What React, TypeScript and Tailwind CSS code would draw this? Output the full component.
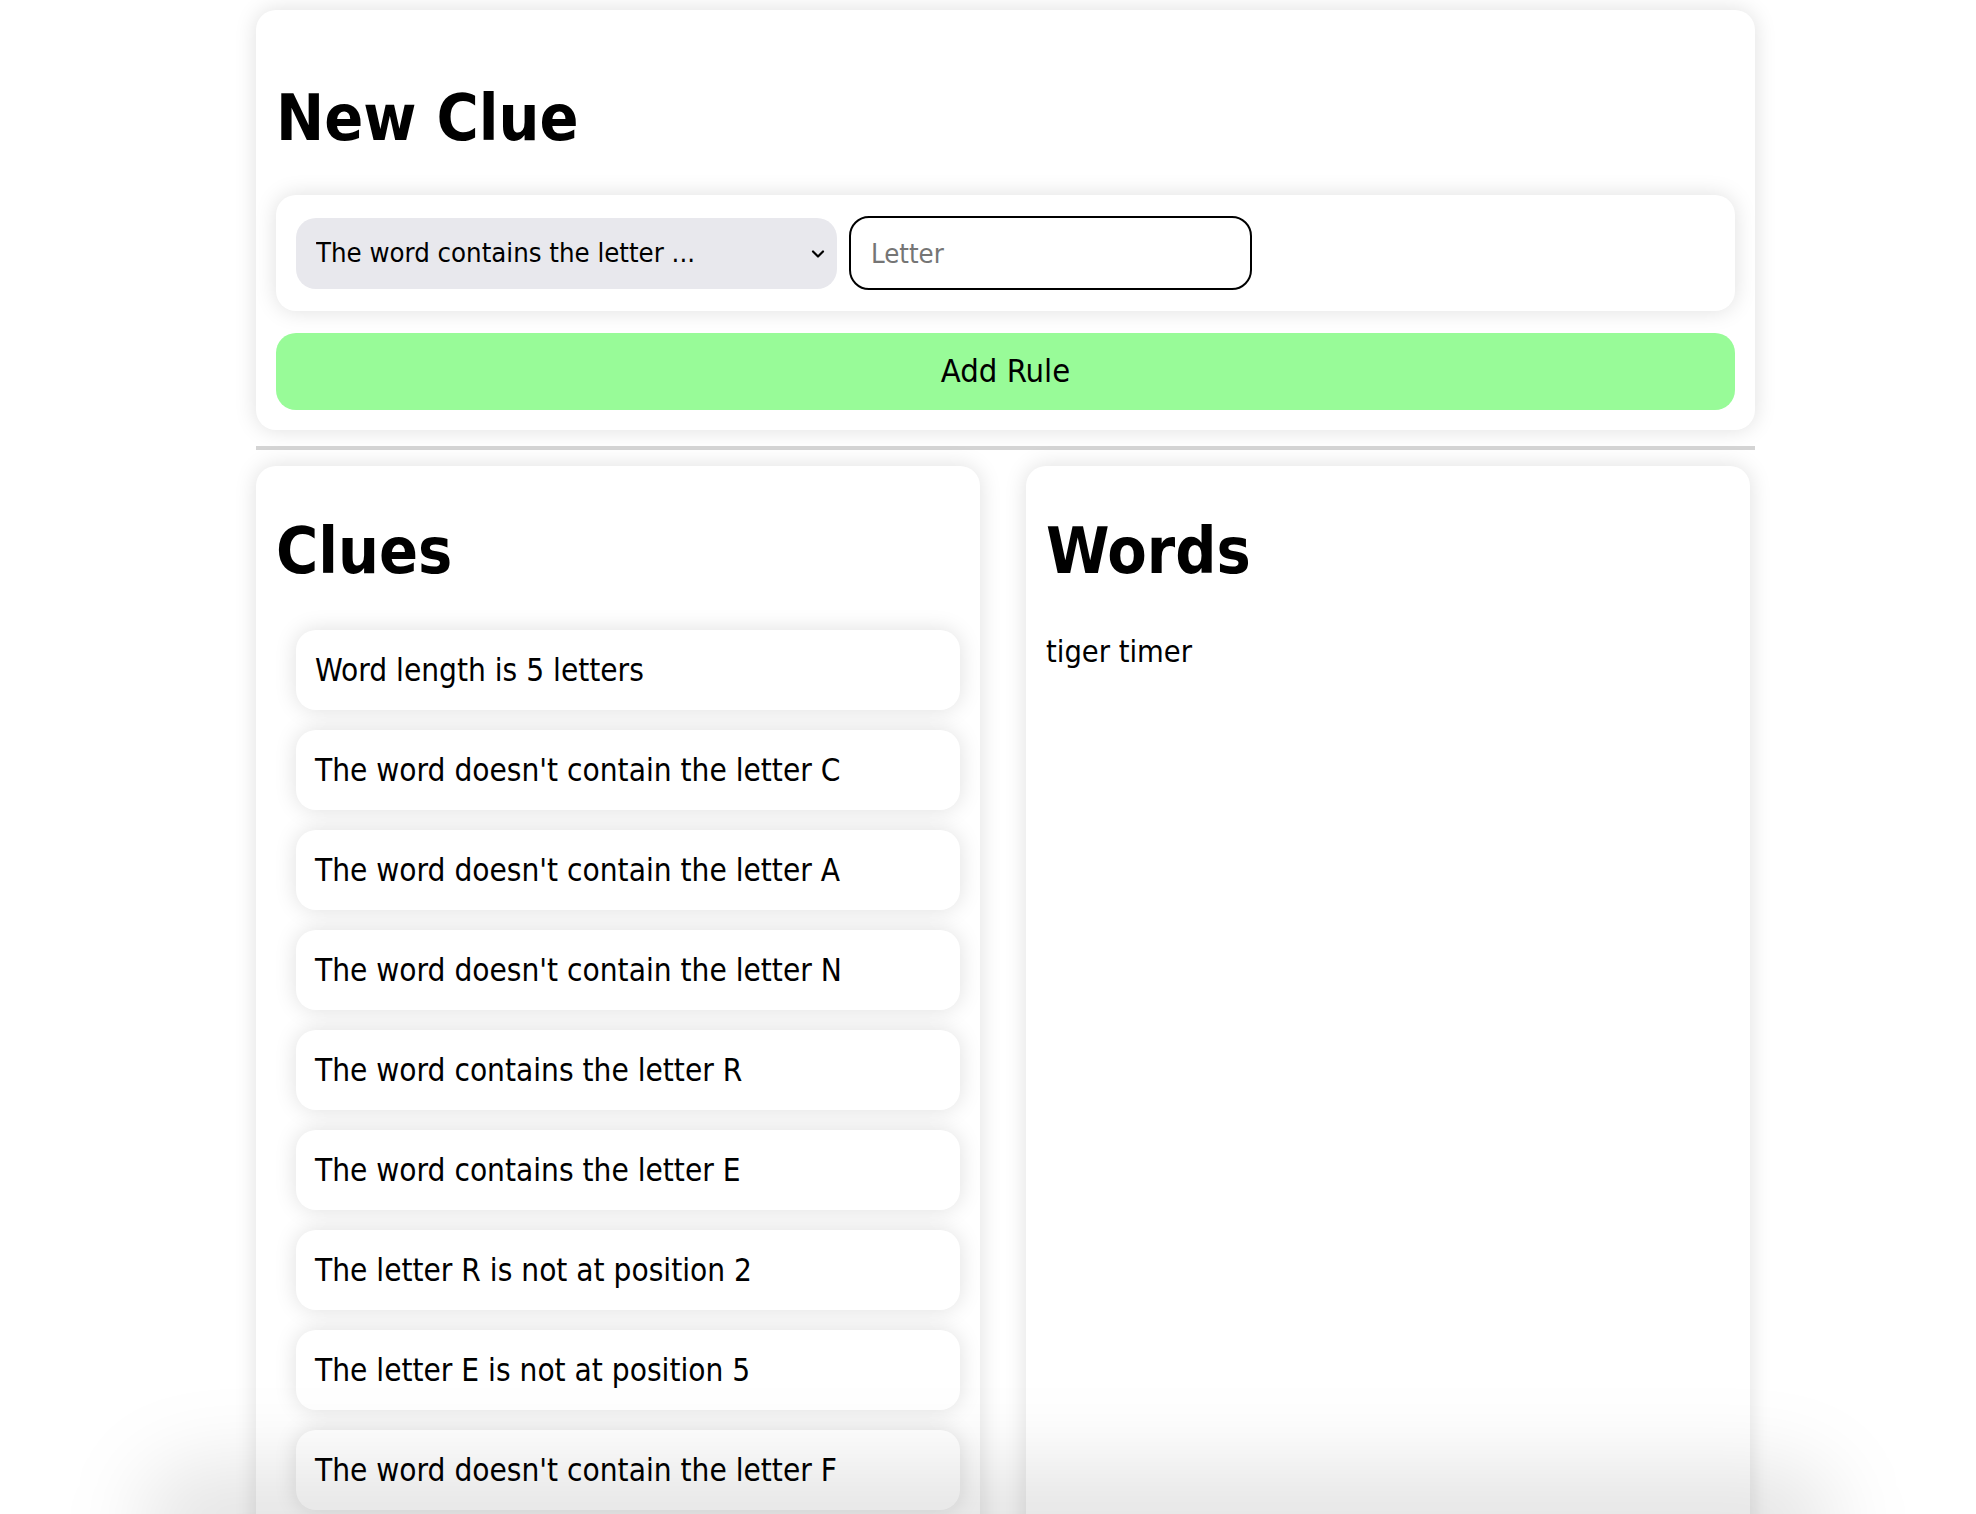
import { ChevronDown } from 'lucide-react';

const clues = [
  'Word length is 5 letters',
  "The word doesn't contain the letter C",
  "The word doesn't contain the letter A",
  "The word doesn't contain the letter N",
  'The word contains the letter R',
  'The word contains the letter E',
  'The letter R is not at position 2',
  'The letter E is not at position 5',
  "The word doesn't contain the letter F",
];

const card = 'bg-white rounded-[20px] shadow-[0_0_22px_rgba(0,0,0,0.13)]';

const Heading = ({ children, className }: { children: string; className: string }) => (
  <h1 className={`text-[64px] leading-none font-bold text-black ${className}`}>{children}</h1>
);

const NewClue = () => (
  <div className={`${card} px-[20px] pb-[20px] pt-[20px]`}>
    <Heading className="mt-[56px] mb-[45px]">New Clue</Heading>
    <div className={`${card} h-[116px] px-[20px] flex items-center gap-[12px]`}>
      <div className="relative w-[541px] h-[71px]">
        <select className="appearance-none w-full h-full bg-[#e8e8ed] rounded-[20px] pl-[20px] pr-[40px] text-[27.3px] text-black outline-none">
          <option>The word contains the letter ...</option>
        </select>
        <ChevronDown className="absolute right-[9px] top-[26px] pointer-events-none" size={20} strokeWidth={2.6} />
      </div>
      <input
        placeholder="Letter"
        className="w-[403px] h-[74px] border-[2.5px] border-black rounded-[20px] px-[20px] text-[27.3px] placeholder:text-[#757575] outline-none"
      />
    </div>
    <button className="mt-[22px] w-full h-[77px] rounded-[20px] bg-[#98fb98] text-[32.5px] text-black">Add Rule</button>
  </div>
);

export default function App() {
  return (
    <div className="min-h-screen bg-white font-['DejaVu_Sans_Condensed','DejaVu_Sans',sans-serif] text-black overflow-hidden">
      <div className="ml-[256px] w-[1499px] pt-[10px]">
        <NewClue />
        <div className="mt-[16px] h-[4px] bg-[#d4d4d4]" />
        <div className="mt-[16px] flex gap-[46px]">
          <div className={`${card} w-[724px] pt-[20px] pl-[40px] pr-[20px] pb-[40px]`}>
            <Heading className="-ml-[20px] mt-[33px] mb-[47px]">Clues</Heading>
            <ul className="flex flex-col gap-[20px]">
              {clues.map((c) => (
                <li key={c} className={`${card} h-[80px] px-[19px] flex items-center text-[31.3px] shadow-[0_0_18px_rgba(0,0,0,0.11)]`}>
                  {c}
                </li>
              ))}
            </ul>
          </div>
          <div className={`${card} w-[724px] self-stretch px-[20px] pt-[20px]`}>
            <Heading className="mt-[33px] mb-[54px]">Words</Heading>
            <p className="text-[30.5px] leading-none">tiger timer</p>
          </div>
        </div>
      </div>
      <div className="pointer-events-none fixed left-[140px] right-[140px] bottom-[-70px] h-[120px] rounded-full bg-black/10 blur-[40px]" />
    </div>
  );
}
